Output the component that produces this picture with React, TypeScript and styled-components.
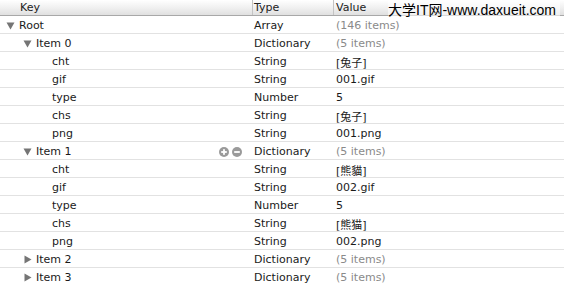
import styled, { createGlobalStyle } from 'styled-components';

const GlobalStyle = createGlobalStyle`
  html, body {
    margin: 0;
    padding: 0;
    background: #ffffff;
  }
  body {
    width: 564px;
    height: 284px;
    overflow: hidden;
    font-family: 'DejaVu Sans', 'Noto Sans CJK SC', sans-serif;
  }
`;

type Row = {
  key: string;
  type: string;
  value: string;
  level: number;
  toggle?: 'open' | 'closed';
  muted?: boolean;
  buttons?: boolean;
};

const rows: Row[] = [
  { key: 'Root', type: 'Array', value: '(146 items)', level: 0, toggle: 'open', muted: true },
  { key: 'Item 0', type: 'Dictionary', value: '(5 items)', level: 1, toggle: 'open', muted: true },
  { key: 'cht', type: 'String', value: '[兔子]', level: 2 },
  { key: 'gif', type: 'String', value: '001.gif', level: 2 },
  { key: 'type', type: 'Number', value: '5', level: 2 },
  { key: 'chs', type: 'String', value: '[兔子]', level: 2 },
  { key: 'png', type: 'String', value: '001.png', level: 2 },
  { key: 'Item 1', type: 'Dictionary', value: '(5 items)', level: 1, toggle: 'open', muted: true, buttons: true },
  { key: 'cht', type: 'String', value: '[熊貓]', level: 2 },
  { key: 'gif', type: 'String', value: '002.gif', level: 2 },
  { key: 'type', type: 'Number', value: '5', level: 2 },
  { key: 'chs', type: 'String', value: '[熊猫]', level: 2 },
  { key: 'png', type: 'String', value: '002.png', level: 2 },
  { key: 'Item 2', type: 'Dictionary', value: '(5 items)', level: 1, toggle: 'closed', muted: true },
  { key: 'Item 3', type: 'Dictionary', value: '(5 items)', level: 1, toggle: 'closed', muted: true },
];

// left padding of the key column per tree level
const indents = [6, 23, 39];

const Triangle = ({ open }: { open: boolean }) => (
  <svg width="9" height="9" viewBox="0 0 9 9">
    {open ? (
      <polygon points="0.5,1.5 8.5,1.5 4.5,8.5" fill="#757575" />
    ) : (
      <polygon points="1.5,0.5 8.5,4.5 1.5,8.5" fill="#757575" />
    )}
  </svg>
);

const RoundButton = ({ plus }: { plus: boolean }) => (
  <svg width="10" height="10" viewBox="0 0 10 10">
    <circle cx="5" cy="5" r="5" fill="#9a9a9a" />
    <rect x="2.2" y="4.1" width="5.6" height="1.8" fill="#ffffff" />
    {plus && <rect x="4.1" y="2.2" width="1.8" height="5.6" fill="#ffffff" />}
  </svg>
);

export default function App() {
  return (
    <>
      <GlobalStyle />
      <Table>
        <Header>
          <HeadCell $width={252}>
            <HeadLabel $pad={20}>Key</HeadLabel>
          </HeadCell>
          <HeadCell $width={81} $divider>
            <HeadLabel $pad={1}>Type</HeadLabel>
          </HeadCell>
          <HeadCell $width={231} $divider>
            <HeadLabel $pad={2}>Value</HeadLabel>
          </HeadCell>
          <Watermark>大学IT网-www.daxueit.com</Watermark>
        </Header>
        {rows.map((r, i) => (
          <RowLine key={i}>
            <KeyCell $indent={indents[r.level]}>
              <Toggle>{r.toggle && <Triangle open={r.toggle === 'open'} />}</Toggle>
              <KeyText>{r.key}</KeyText>
              {r.buttons && (
                <Buttons>
                  <RoundButton plus />
                  <RoundButton plus={false} />
                </Buttons>
              )}
            </KeyCell>
            <TypeCell>{r.type}</TypeCell>
            <ValueCell $muted={r.muted}>{r.value}</ValueCell>
          </RowLine>
        ))}
      </Table>
    </>
  );
}

const Table = styled.div`
  display: flex;
  flex-direction: column;
  width: 564px;
  font-size: 11px;
  color: #1a1a1a;
`;

const Header = styled.div`
  position: relative;
  display: flex;
  flex: none;
  height: 16px;
  background: linear-gradient(#ffffff, #efefef 55%, #e0e0e0);
  border-bottom: 1px solid #a8a8a8;
  box-sizing: border-box;
`;

const HeadCell = styled.div<{ $width: number; $divider?: boolean }>`
  width: ${(p) => p.$width}px;
  display: flex;
  align-items: center;
  border-left: ${(p) => (p.$divider ? '1px solid #c4c4c4' : 'none')};
  box-sizing: border-box;
`;

const HeadLabel = styled.span<{ $pad: number }>`
  padding-left: ${(p) => p.$pad}px;
  line-height: 14px;
  color: #222;
`;

const Watermark = styled.div`
  position: absolute;
  left: 388px;
  top: 1px;
  white-space: nowrap;
  font-family: 'Liberation Sans', 'Noto Sans CJK SC', sans-serif;
  font-size: 14px;
  line-height: 19px;
  color: #000;
  background: rgba(255, 255, 255, 0.55);
  padding-right: 4px;
`;

const RowLine = styled.div`
  display: flex;
  flex: none;
  height: 18px;
  align-items: center;
  padding-top: 2px;
  border-bottom: 1px solid #e2e2e2;
  box-sizing: border-box;
`;

const KeyCell = styled.div<{ $indent: number }>`
  width: 253px;
  display: flex;
  align-items: center;
  padding-left: ${(p) => p.$indent}px;
  padding-right: 11px;
  box-sizing: border-box;
`;

const Toggle = styled.span`
  width: 12px;
  display: flex;
  align-items: center;
`;

const KeyText = styled.span`
  flex: 1;
  padding-left: 1px;
`;

const Buttons = styled.span`
  display: flex;
  gap: 3px;
`;

const TypeCell = styled.div`
  width: 81px;
  padding-left: 1px;
  box-sizing: border-box;
`;

const ValueCell = styled.div<{ $muted?: boolean }>`
  flex: 1;
  padding-left: 2px;
  color: ${(p) => (p.$muted ? '#8a8a8a' : '#1a1a1a')};
`;
